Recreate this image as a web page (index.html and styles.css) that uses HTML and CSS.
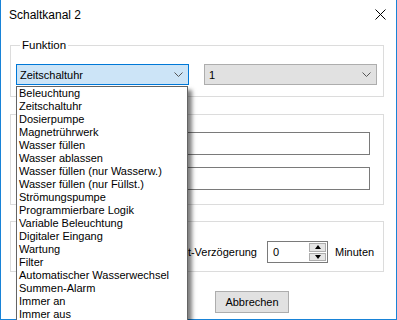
FILE: index.html
```html
<!DOCTYPE html>
<html lang="de">
<head>
<meta charset="UTF-8">
<meta name="viewport" content="width=device-width, initial-scale=1.0">
<title>Schaltkanal 2</title>
<link rel="stylesheet" href="styles.css">
</head>
<body>
<div class="window">
  <div class="titlebar">
    <span class="title">Schaltkanal 2</span>
    <svg class="close" width="11" height="11" viewBox="0 0 11 11">
      <path d="M0.5 0.5 L10.5 10.5 M10.5 0.5 L0.5 10.5" stroke="#000" stroke-width="1" fill="none"/>
    </svg>
  </div>

  <div class="content">
    <fieldset class="group group-function">
      <legend>Funktion</legend>
      <div class="combo-row">
        <div class="combo combo-active">
          <span>Zeitschaltuhr</span>
          <svg width="9" height="5" viewBox="0 0 9 5"><path d="M0.5 0.5 L4.5 4.5 L8.5 0.5" stroke="#555" fill="none"/></svg>
        </div>
        <div class="combo">
          <span>1</span>
          <svg width="9" height="5" viewBox="0 0 9 5"><path d="M0.5 0.5 L4.5 4.5 L8.5 0.5" stroke="#555" fill="none"/></svg>
        </div>
      </div>
    </fieldset>

    <div class="group group-fields">
      <div class="textbox"></div>
      <div class="textbox"></div>
    </div>

    <div class="group group-delay">
      <span class="delay-label">Start-Verzögerung</span>
      <div class="spin">
        <span class="spin-value">0</span>
        <div class="spin-buttons">
          <div class="spin-btn"><span class="tri-up"></span></div>
          <div class="spin-btn"><span class="tri-down"></span></div>
        </div>
      </div>
      <span class="unit">Minuten</span>
    </div>

    <div class="button-row">
      <button class="btn">Abbrechen</button>
    </div>
  </div>
</div>

<!-- open dropdown of the first combo -->
<ul class="dropdown">
  <li>Beleuchtung</li>
  <li>Zeitschaltuhr</li>
  <li>Dosierpumpe</li>
  <li>Magnetrührwerk</li>
  <li>Wasser füllen</li>
  <li>Wasser ablassen</li>
  <li>Wasser füllen (nur Wasserw.)</li>
  <li>Wasser füllen (nur Füllst.)</li>
  <li>Strömungspumpe</li>
  <li>Programmierbare Logik</li>
  <li>Variable Beleuchtung</li>
  <li>Digitaler Eingang</li>
  <li>Wartung</li>
  <li>Filter</li>
  <li>Automatischer Wasserwechsel</li>
  <li>Summen-Alarm</li>
  <li>Immer an</li>
  <li>Immer aus</li>
</ul>
</body>
</html>
```

FILE: styles.css
```css
html, body {
  margin: 0;
  padding: 0;
  overflow: hidden;
}
body {
  font-family: "Segoe UI", "Liberation Sans", Arial, sans-serif;
  font-size: 11px;
  line-height: 16px;
  color: #000;
  background: #fff;
  position: relative;
  width: 397px;
  height: 320px;
}
.window {
  box-sizing: border-box;
  width: 397px;
  height: 320px;
  border: 1px solid #1883d7;
  border-top: none;
  background: #fff;
}
.titlebar {
  height: 30px;
  display: flex;
  align-items: center;
  justify-content: space-between;
  padding: 0 10px 0 8px;
}
.title {
  font-size: 12px;
}
.close {
  display: block;
  margin-top: -1px;
}
.content {
  padding: 7px 12px 0 9px;
}
.group {
  border: 1px solid #dcdcdc;
  margin: 0;
}
.group-function {
  padding: 11px 6px 11px 5px;
}
.group-function legend {
  margin-left: 4px;
  padding: 0 2px;
  line-height: 16px;
  font-size: 11.5px;
}
.combo-row {
  display: flex;
  gap: 15px;
}
.combo {
  box-sizing: border-box;
  width: 173px;
  height: 21px;
  border: 1px solid #adadad;
  background: #e1e1e1;
  display: flex;
  align-items: center;
  justify-content: space-between;
  padding: 0 5px 0 4px;
}
.combo-active {
  border-color: #0078d7;
  background: #cce4f7;
  padding-left: 3px;
}
.group-fields {
  margin-top: 17px;
  padding: 17px 13px 14px 0;
  display: flex;
  flex-direction: column;
  align-items: flex-end;
  gap: 12px;
}
.textbox {
  box-sizing: border-box;
  width: 270px;
  height: 23px;
  border: 1px solid #7a7a7a;
  background: #fff;
}
.group-delay {
  margin-top: 16px;
  padding: 19px 0 8px 0;
  display: flex;
  align-items: center;
}
.delay-label {
  width: 246px;
  text-align: right;
}
.spin {
  box-sizing: border-box;
  margin-left: 10px;
  width: 61px;
  height: 22px;
  border: 1px solid #7a7a7a;
  display: flex;
  align-items: center;
  justify-content: space-between;
  padding: 1px 1px 1px 5px;
}
.spin-buttons {
  display: flex;
  flex-direction: column;
  height: 100%;
}
.spin-btn {
  box-sizing: border-box;
  width: 17px;
  height: 9px;
  border: 1px solid #adadad;
  background: #e5e5e5;
  display: flex;
  align-items: center;
  justify-content: center;
}
.spin-btn + .spin-btn {
  margin-top: 1px;
}
.tri-up, .tri-down {
  width: 0;
  height: 0;
  border-left: 3.5px solid transparent;
  border-right: 3.5px solid transparent;
}
.tri-up {
  border-bottom: 4px solid #000;
}
.tri-down {
  border-top: 4px solid #000;
}
.unit {
  margin-left: 7px;
}
.button-row {
  margin-top: 19px;
  padding-left: 205px;
}
.btn {
  box-sizing: border-box;
  width: 74px;
  height: 22px;
  border: 1px solid #adadad;
  background: #e1e1e1;
  font: inherit;
  color: #000;
  padding: 0;
}
.dropdown {
  position: absolute;
  left: 16px;
  top: 86px;
  width: 172px;
  box-sizing: border-box;
  margin: 0;
  padding: 0;
  list-style: none;
  border: 1px solid #646464;
  background: #fff;
  box-shadow: 4px 4px 4px rgba(0, 0, 0, 0.5);
}
.dropdown li {
  height: 13px;
  line-height: 13px;
  padding-left: 2px;
  white-space: nowrap;
}
```
